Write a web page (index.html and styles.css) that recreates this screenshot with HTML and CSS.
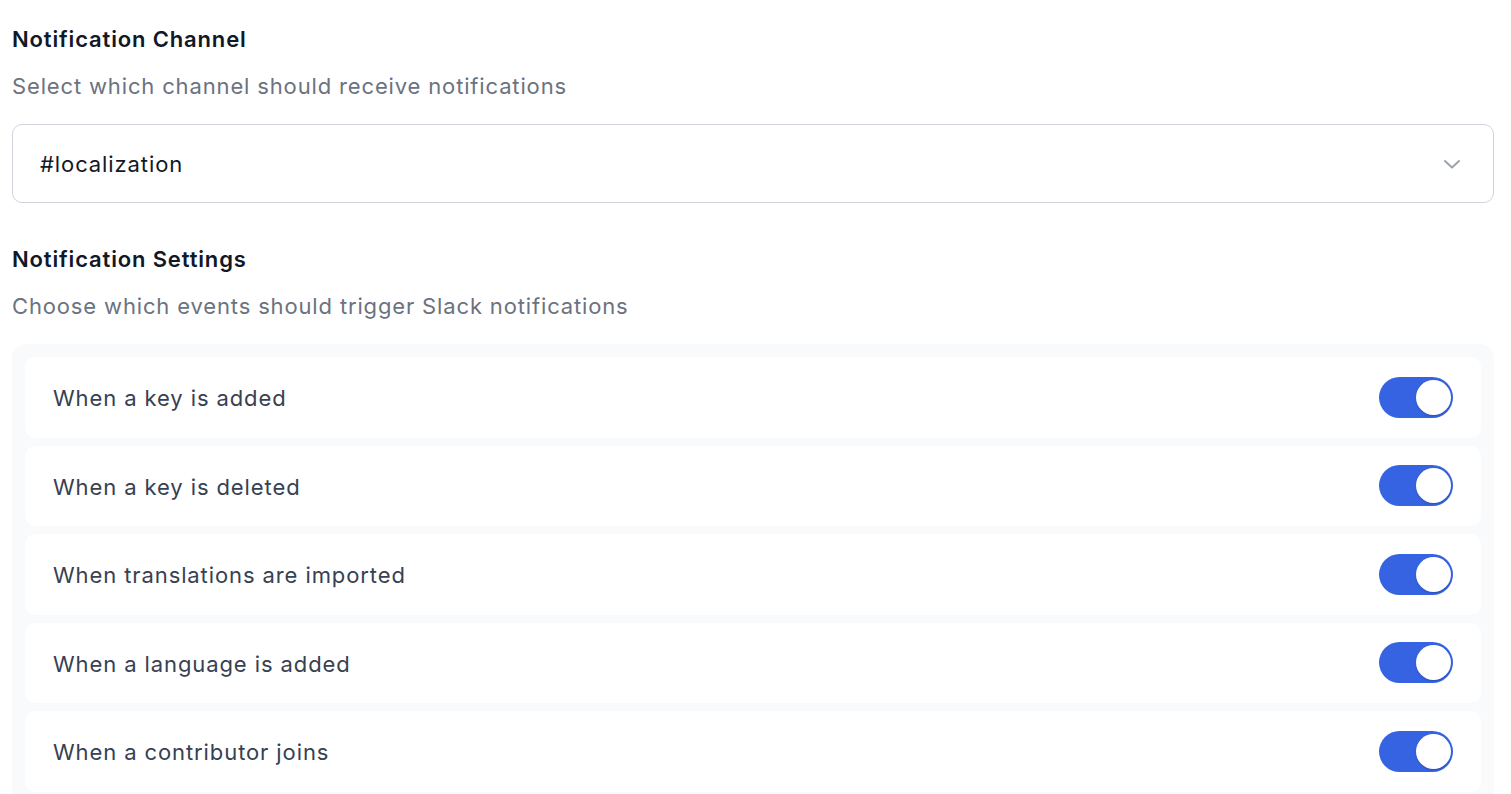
FILE: index.html
```html
<!DOCTYPE html>
<html>
<head>
<meta charset="utf-8">
<link rel="stylesheet" href="styles.css">
</head>
<body>
<div class="page">
  <section class="section">
    <h2 class="title">Notification Channel</h2>
    <p class="subtitle">Select which channel should receive notifications</p>
    <div class="select">
      <span class="select-value">#localization</span>
      <svg class="chevron" width="18" height="11" viewBox="0 0 18 11"><path d="M2 2 L9 8.5 L16 2" fill="none" stroke="#9ca3af" stroke-width="2" stroke-linecap="round" stroke-linejoin="round"/></svg>
    </div>
  </section>
  <section class="section second">
    <h2 class="title">Notification Settings</h2>
    <p class="subtitle">Choose which events should trigger Slack notifications</p>
    <div class="list">
      <div class="row"><span class="label">When a key is added</span><span class="toggle"><span class="knob"></span></span></div>
      <div class="row"><span class="label">When a key is deleted</span><span class="toggle"><span class="knob"></span></span></div>
      <div class="row"><span class="label">When translations are imported</span><span class="toggle"><span class="knob"></span></span></div>
      <div class="row"><span class="label">When a language is added</span><span class="toggle"><span class="knob"></span></span></div>
      <div class="row"><span class="label">When a contributor joins</span><span class="toggle"><span class="knob"></span></span></div>
    </div>
  </section>
</div>
</body>
</html>
```

FILE: styles.css
```css
* { box-sizing: border-box; }
html, body { margin: 0; padding: 0; background: #ffffff; }
body {
  font-family: Inter, "Noto Sans", sans-serif;
  overflow: hidden;
  height: 794px;
  letter-spacing: 0.9px;
}
.page {
  padding: 24px 17px 0 12px;
}
.section { display: flex; flex-direction: column; }
.second { margin-top: 41px; }
.title {
  margin: 0;
  font-size: 22px;
  line-height: 30px;
  font-weight: 600;
  color: #111827;
  letter-spacing: 0.85px;
}
.subtitle {
  margin: 17px 0 0 0;
  font-size: 22px;
  line-height: 30px;
  font-weight: 400;
  color: #6b7280;
  letter-spacing: 0.85px;
}
.select {
  margin-top: 23px;
  height: 79px;
  border: 1.5px solid #d1d5db;
  border-radius: 10px;
  display: flex;
  align-items: center;
  justify-content: space-between;
  padding: 0 32px 0 27px;
}
.select-value {
  font-size: 22px;
  color: #111827;
}
.chevron { display: block; margin-top: 1px; }
.list {
  margin-top: 23px;
  background: #f9fafb;
  border-radius: 14px;
  padding: 13px;
  display: flex;
  flex-direction: column;
  gap: 8px;
}
.row {
  height: 80.5px;
  background: #ffffff;
  border-radius: 10px;
  display: flex;
  align-items: center;
  justify-content: space-between;
  padding: 0 28px 0 28px;
}
.label {
  font-size: 22px;
  color: #374151;
  margin-top: 2px;
}
.toggle {
  width: 74px;
  height: 41px;
  border-radius: 21px;
  background: #3563e2;
  position: relative;
  display: block;
}
.knob {
  position: absolute;
  top: 3px;
  right: 2.5px;
  width: 35px;
  height: 35px;
  border-radius: 50%;
  background: #ffffff;
  box-shadow: 0 1px 2px rgba(0,0,0,0.2);
}
```
